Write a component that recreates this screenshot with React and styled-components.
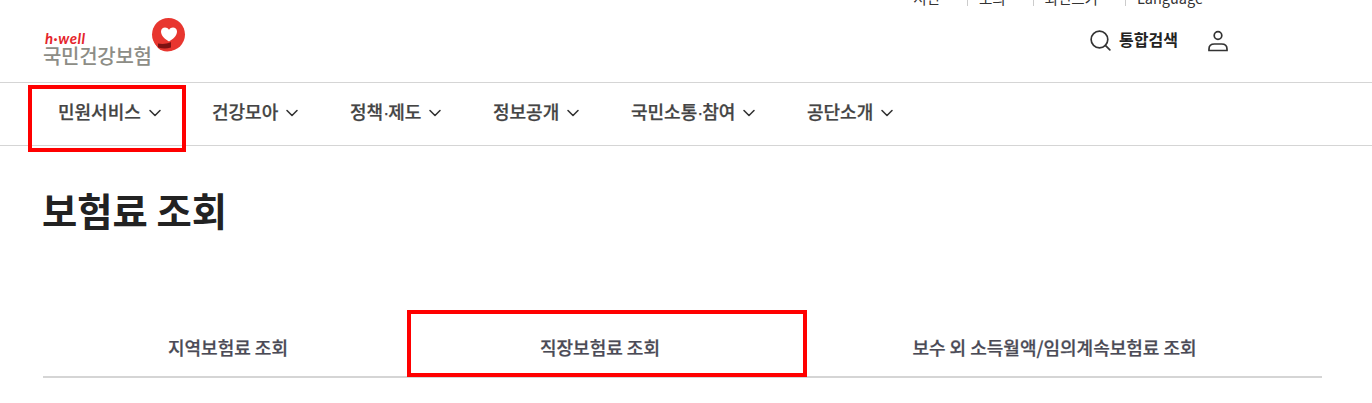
import React from "react";
import styled, { createGlobalStyle } from "styled-components";
import { Search, ChevronDown } from "lucide-react";

const GlobalStyle = createGlobalStyle`
	html, body {
		margin: 0;
		padding: 0;
		background: #fff;
		overflow: hidden;
	}
	body {
		font-family: "Noto Sans CJK KR", "Noto Sans", sans-serif;
		color: #222;
	}
`;

const utilItems = ["서민", "도의", "외면스키", "Language"];
const menuItems = [
	{ label: "민원서비스", width: 154, marked: true },
	{ label: "건강모아", width: 138 },
	{ label: "정책·제도", width: 143 },
	{ label: "정보공개", width: 138 },
	{ label: "국민소통·참여", width: 176 },
	{ label: "공단소개", width: 138 },
];
const tabs = [
	{ label: "지역보험료 조회", width: 370 },
	{ label: "직장보험료 조회", width: 374, marked: true },
	{ label: "보수 외 소득월액/임의계속보험료 조회", width: 535 },
];

// the dot between words is narrower in the original font
const withThinDot = (label) => {
	const parts = label.split("·");
	if (parts.length === 1) return label;
	return (
		<>
			{parts[0]}
			<ThinDot>·</ThinDot>
			{parts[1]}
		</>
	);
};

const App = () => {
	return (
		<>
			<GlobalStyle />
			<Page>
				<Header>
					<UtilBar>
						{utilItems.map((item, i) => (
							<UtilItem key={item} $first={i === 0}>
								{item}
								<UtilCaret />
							</UtilItem>
						))}
					</UtilBar>
					<HeaderMain>
						<Logo>
							<LogoText>
								<Slogan>h·well</Slogan>
								<LogoName>국민건강보험</LogoName>
							</LogoText>
							<LogoMark viewBox="0 0 35 35">
								<circle cx="17.500" cy="16.500" r="16.500" fill="#e8362f" />
								<path d="M3 24L7 30c3 3 8 4 13 3l4-3z" fill="#e8362f" />
								<path
									d="M18 23.500C14 21 10 18 10 13.500 10 11 12 9.500 14 9.500c1.700 0 3 .8 4 2.200 1-1.400 2.300-2.200 4-2.200 2 0 4 1.500 4 4 0 4.500-4 7.500-8 10z"
									fill="#fff"
								/>
								<path d="M7 25.500c4 .8 8 .8 13-1.500v5.500c-5 1.500-9 1-13 0z" fill="#7d1212" />
							</LogoMark>
						</Logo>
						<HeaderTools>
							<SearchButton>
								<Search size={25} strokeWidth={1.6} color="#333" />
								<SearchLabel>통합검색</SearchLabel>
							</SearchButton>
							<UserIcon viewBox="0 0 22 22" fill="none" stroke="#333" strokeWidth="1.7">
								<circle cx="11" cy="5.500" r="3.800" />
								<path d="M2 20.500V19c0-3 2-5 5.500-5h7c3.500 0 5.500 2 5.500 5v1.500z" />
							</UserIcon>
						</HeaderTools>
					</HeaderMain>
				</Header>
				<Nav>
					{menuItems.map((item) => (
						<NavItem key={item.label} $width={item.width} $marked={item.marked}>
							<span>{withThinDot(item.label)}</span>
							<NavChevron size={20} strokeWidth={1.9} color="#333" />
						</NavItem>
					))}
				</Nav>
				<Content>
					<Title>보험료 조회</Title>
					<Tabs>
						{tabs.map((tab) => (
							<Tab key={tab.label} $width={tab.width} $marked={tab.marked}>
								{tab.label}
							</Tab>
						))}
					</Tabs>
				</Content>
			</Page>
		</>
	);
};

export default App;

const Page = styled.div`
	width: 1372px;
	height: 403px;
	overflow: hidden;
`;

const Header = styled.header`
	height: 82px;
	border-bottom: 1px solid #d5d5d5;
	padding: 0 43px;
	position: relative;
`;

const UtilBar = styled.ul`
	position: absolute;
	top: -10px;
	right: 142px;
	display: flex;
	margin: 0;
	padding: 0;
	list-style: none;
	font-size: 14.500px;
	line-height: 16px;
	color: #333;
`;

const UtilItem = styled.li`
	display: flex;
	align-items: center;
	gap: 8px;
	padding: 0 16px 0 11px;
	border-left: ${(p) => (p.$first ? "none" : "1px solid #ccc")};
`;

const UtilCaret = styled.i`
	width: 3px;
	height: 3px;
	background: #888;
`;

const HeaderMain = styled.div`
	display: flex;
	align-items: flex-start;
	justify-content: space-between;
	padding-top: 17px;
`;

const Logo = styled.a`
	display: flex;
	align-items: flex-start;
`;

const LogoText = styled.div`
	display: flex;
	flex-direction: column;
	padding-top: 15px;
`;

const Slogan = styled.em`
	font-family: "Lato", "Liberation Sans", sans-serif;
	font-size: 15px;
	line-height: 13px;
	font-weight: 700;
	color: #e5252c;
	padding-left: 2px;
	letter-spacing: 0.5px;
`;

const LogoName = styled.strong`
	font-size: 20px;
	line-height: 21px;
	font-weight: 500;
	color: #8d8d86;
	letter-spacing: -0.3px;
`;

const LogoMark = styled.svg`
	width: 35px;
	height: 35px;
	margin: 1px 0 0 -1px;
`;

const HeaderTools = styled.div`
	display: flex;
	align-items: center;
	gap: 29px;
	margin: 10px 100px 0 0;
`;

const SearchButton = styled.div`
	display: flex;
	align-items: center;
	gap: 6px;
	font-size: 16px;
	font-weight: 700;
	color: #222;
`;

const SearchLabel = styled.span`
	margin-bottom: 3px;
`;

const UserIcon = styled.svg`
	width: 22px;
	height: 22px;
`;

const Nav = styled.nav`
	display: flex;
	height: 62px;
	padding-left: 28px;
	border-bottom: 1px solid #d5d5d5;
`;

const NavItem = styled.a`
	box-sizing: border-box;
	width: ${(p) => p.$width}px;
	height: 62px;
	display: flex;
	align-items: center;
	gap: 4px;
	padding-left: 30px;
	padding-bottom: 6px;
	font-size: 18px;
	font-weight: 500;
	-webkit-text-stroke: 0.25px #444;
	color: #444;
	position: relative;
	${(p) =>
		p.$marked &&
		`&::after {
			content: "";
			position: absolute;
			inset: 2px -4px -7px 0;
			border: 4px solid #f00;
		}`}
`;

const ThinDot = styled.span`
	display: inline-block;
	font-family: "Liberation Sans", sans-serif;
	width: 5px;
	text-align: center;
`;

const NavChevron = styled(ChevronDown)`
	margin-top: 3px;
`;

const Content = styled.main`
	padding: 0 50px 0 43px;
`;

const Title = styled.h1`
	margin: 35px 0 0 -1px;
	font-size: 38.300px;
	line-height: 58px;
	font-weight: 700;
	color: #222;
`;

const Tabs = styled.div`
	display: flex;
	margin-top: 75px;
	height: 62px;
	border-bottom: 2px solid #d5d5d5;
`;

const Tab = styled.a`
	box-sizing: border-box;
	width: ${(p) => p.$width}px;
	display: flex;
	align-items: center;
	justify-content: center;
	padding-top: 4px;
	font-size: 18px;
	font-weight: 500;
	-webkit-text-stroke: 0.25px #4a4a55;
	color: #4a4a55;
	position: relative;
	${(p) =>
		p.$marked &&
		`&::after {
			content: "";
			position: absolute;
			inset: -4px -20px -1px -6px;
			border: 4px solid #f00;
		}`}
`;
